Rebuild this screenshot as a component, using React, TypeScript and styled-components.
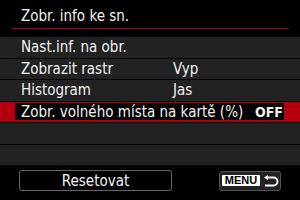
import React from "react";
import styled, { createGlobalStyle } from "styled-components";

const GlobalStyle = createGlobalStyle`
  html, body {
    margin: 0;
    padding: 0;
    background: #000;
  }
  body {
    font-family: "DejaVu Sans Condensed", "DejaVu Sans", sans-serif;
    font-stretch: condensed;
  }
`;

type Item = { label: string; value?: string; selected?: boolean };

const items: Item[] = [
  { label: "Nast.inf. na obr." },
  { label: "Zobrazit rastr", value: "Vyp" },
  { label: "Histogram", value: "Jas" },
  { label: "Zobr. volného místa na kartě (%)", value: "OFF", selected: true },
  { label: "" },
  { label: "" },
];

export default function App() {
  return (
    <>
      <GlobalStyle />
      <Screen>
        <Header>
          <Title>Zobr. info ke sn.</Title>
        </Header>
        <List>
          {items.map((item, i) =>
            item.selected ? (
              <Row key={i} $selected>
                <SelBox>
                  <Label>{item.label}</Label>
                  <Off>{item.value}</Off>
                </SelBox>
              </Row>
            ) : (
              <Row key={i}>
                <Label>{item.label}</Label>
                {item.value && <Value>{item.value}</Value>}
              </Row>
            )
          )}
        </List>
        <Footer>
          <ResetBtn>Resetovat</ResetBtn>
          <MenuBtn>
            <MenuTag>MENU</MenuTag>
            <svg width="16" height="12" viewBox="0 0 16 12">
              <path d="M1 2.5 L5 0 L5 5 Z" fill="#fff" />
              <path
                d="M4 2.5 H10.5 A4 4 0 0 1 10.5 10.5 H2"
                fill="none"
                stroke="#fff"
                strokeWidth="1.8"
              />
            </svg>
          </MenuBtn>
        </Footer>
      </Screen>
    </>
  );
}

const Screen = styled.div`
  width: 300px;
  height: 200px;
  background: #000;
  color: #f2f2f2;
  display: flex;
  flex-direction: column;
  overflow: hidden;
`;

const Header = styled.div`
  height: 29px;
  margin: 0 11px 0 11px;
  border-bottom: 1px solid #a3001c;
  display: flex;
  align-items: flex-end;
  padding-left: 10px;
  box-sizing: border-box;
`;

const Title = styled.div`
  font-size: 15px;
  line-height: 15px;
  margin-bottom: 4px;
`;

const List = styled.div`
  margin-top: 8px;
  display: flex;
  flex-direction: column;
  gap: 1px;
`;

const Row = styled.div<{ $selected?: boolean }>`
  height: 20.5px;
  background: ${(p) => (p.$selected ? "#b3000f" : "#222")};
  display: flex;
  align-items: center;
  padding-left: ${(p) => (p.$selected ? "15px" : "21px")};
  font-size: 15px;
  white-space: nowrap;
`;

const SelBox = styled.div`
  background: #000;
  width: 269px;
  height: 17px;
  display: flex;
  align-items: center;
  padding-left: 6px;
  box-sizing: border-box;
`;

const Label = styled.span`
  width: 152px;
  flex-shrink: 0;
`;

const Value = styled.span``;

const Off = styled.span`
  font-weight: bold;
  margin-left: 82px;
  font-size: 14px;
`;

const Footer = styled.div`
  display: flex;
  align-items: center;
  margin-top: 5px;
  padding: 0 19px 0 19px;
  justify-content: space-between;
`;

const ResetBtn = styled.div`
  width: 153px;
  height: 21px;
  box-sizing: border-box;
  border: 1px solid #666;
  border-radius: 3px;
  display: flex;
  align-items: center;
  justify-content: center;
  font-size: 15px;
`;

const MenuBtn = styled.div`
  width: 62px;
  height: 20px;
  box-sizing: border-box;
  border: 1px solid #555;
  border-radius: 3px;
  background: #222;
  display: flex;
  align-items: center;
  padding-left: 2px;
  gap: 3px;
`;

const MenuTag = styled.div`
  background: #fff;
  color: #000;
  font-family: "Liberation Sans", sans-serif;
  font-weight: bold;
  font-size: 11px;
  line-height: 11px;
  width: 38px;
  text-align: center;
  padding: 0;
  border-radius: 1px;
`;
